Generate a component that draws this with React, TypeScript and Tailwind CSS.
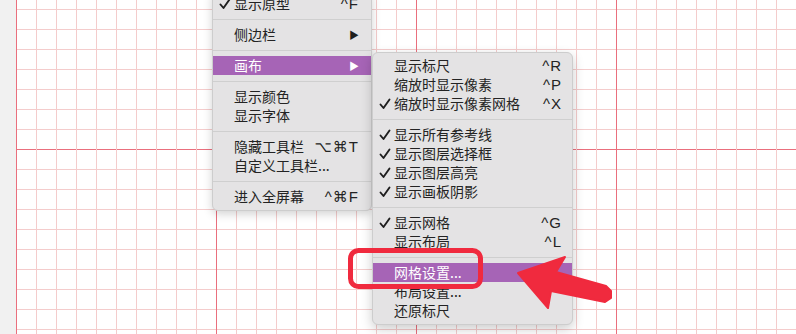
import React from "react";

type Item =
  | { sep: true }
  | { label: string; check?: boolean; shortcut?: string; arrow?: boolean; active?: boolean };

const mainItems: Item[] = [
  { label: "显示原型", check: true, shortcut: "^F" },
  { sep: true },
  { label: "侧边栏", arrow: true },
  { sep: true },
  { label: "画布", arrow: true, active: true },
  { sep: true },
  { label: "显示颜色" },
  { label: "显示字体" },
  { sep: true },
  { label: "隐藏工具栏", shortcut: "⌥⌘T" },
  { label: "自定义工具栏..." },
  { sep: true },
  { label: "进入全屏幕", shortcut: "^⌘F" },
];

const subItems: Item[] = [
  { label: "显示标尺", shortcut: "^R" },
  { label: "缩放时显示像素", shortcut: "^P" },
  { label: "缩放时显示像素网格", check: true, shortcut: "^X" },
  { sep: true },
  { label: "显示所有参考线", check: true },
  { label: "显示图层选择框", check: true },
  { label: "显示图层高亮", check: true },
  { label: "显示画板阴影", check: true },
  { sep: true },
  { label: "显示网格", check: true, shortcut: "^G" },
  { label: "显示布局", shortcut: "^L" },
  { sep: true },
  { label: "网格设置...", active: true },
  { label: "布局设置..." },
  { label: "还原标尺" },
];

function Check({ white }: { white?: boolean }) {
  return (
    <svg width="12" height="12" viewBox="0 0 12 12" className="absolute left-[6px] top-[4px]">
      <path
        d="M1.5 6.5 L4.5 10 L10.5 1.5"
        fill="none"
        stroke={white ? "#fff" : "#1e1e1e"}
        strokeWidth="1.9"
        strokeLinecap="round"
        strokeLinejoin="round"
      />
    </svg>
  );
}

function Menu({ items, right }: { items: Item[]; right: number }) {
  return (
    <>
      {items.map((it, i) => {
        if ("sep" in it) {
          return (
            <div key={i} className="h-[12px] flex items-center">
              <div className="h-px w-full bg-[#cfcfcf]" />
            </div>
          );
        }
        return (
          <div
            key={i}
            className={
              "relative h-[19px] flex items-center pl-[21px] " +
              (it.active ? "bg-[#a664b6] text-white" : "text-[#232323]")
            }
            style={{ paddingRight: right }}
          >
            {it.check && <Check white={it.active} />}
            <span className="flex-1 whitespace-nowrap">{it.label}</span>
            {it.shortcut && (
              <span className="whitespace-nowrap tracking-[1px] font-['Liberation_Sans','DejaVu_Sans',sans-serif] text-[15px]">
                {it.shortcut}
              </span>
            )}
            {it.arrow && (
              <span className={"text-[10px] " + (it.active ? "text-white" : "text-[#1e1e1e]")}>▶</span>
            )}
          </div>
        );
      })}
    </>
  );
}

export default function App() {
  const W = 796;
  const H = 334;
  const vLines: number[] = [];
  for (let x = 16; x < W; x += 20) vLines.push(x);
  const hLines: number[] = [];
  for (let y = 9; y < H; y += 20) hLines.push(y);

  return (
    <div className="relative w-[796px] h-[334px] overflow-hidden bg-white font-['Noto_Sans_CJK_SC','DejaVu_Sans',sans-serif] text-[14px] leading-[19px]">
      <svg width={W} height={H} className="absolute inset-0">
        <rect x="0" y="0" width="16" height={H} fill="#f1f1f1" />
        {hLines.map((y) => (
          <line
            key={"h" + y}
            x1={16}
            x2={W}
            y1={y + 0.5}
            y2={y + 0.5}
            stroke={(y - 149) % 200 === 0 ? "#ea6f7d" : "#f4cccc"}
            strokeWidth="1"
          />
        ))}
        {vLines.map((x) => (
          <line
            key={"v" + x}
            x1={x + 0.5}
            x2={x + 0.5}
            y1={0}
            y2={H}
            stroke={(x - 16) % 200 === 0 ? "#ea6f7d" : "#f4cccc"}
            strokeWidth="1"
          />
        ))}
      </svg>

      <div className="absolute left-[212px] top-[-10px] w-[160px] pt-[3px] pb-[4px] rounded-[6px] bg-[#e4e3e4] border border-[#cdcdcd] shadow-[0_3px_10px_rgba(0,0,0,0.18)]">
        <Menu items={mainItems} right={12} />
      </div>

      <div className="absolute left-[372px] top-[52px] w-[201px] pt-[3px] pb-[4px] rounded-[6px] bg-[#e4e3e4] border border-[#cdcdcd] shadow-[0_4px_12px_rgba(0,0,0,0.2)]">
        <Menu items={subItems} right={10} />
      </div>

      <svg width={W} height={H} className="absolute inset-0 pointer-events-none">
        <rect x="350.5" y="250.5" width="130" height="36" rx="8" fill="none" stroke="#f02a3e" strokeWidth="5" />
        <polygon
          points="518,273 565,257 556,272 606,286 611,291 611,298 605,302 551,291 548,308"
          fill="#f02a3e"
          stroke="#f02a3e"
          strokeWidth="2"
          strokeLinejoin="round"
        />
      </svg>
    </div>
  );
}
